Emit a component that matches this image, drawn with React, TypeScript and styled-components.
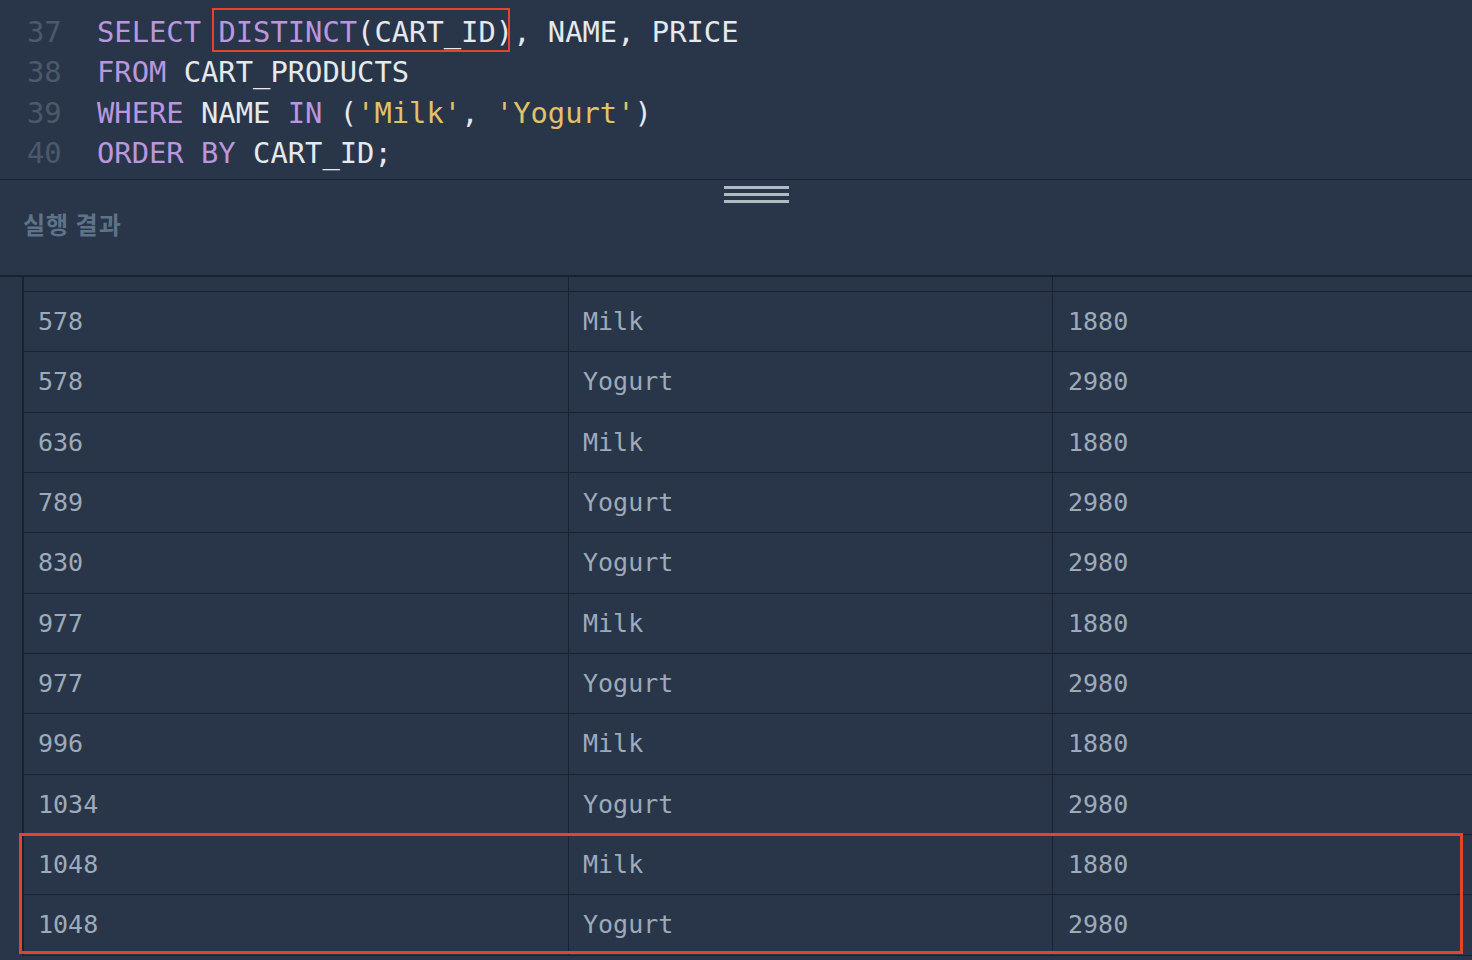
import React from "react";
import styled, { createGlobalStyle } from "styled-components";

const GlobalStyle = createGlobalStyle`
  html, body {
    margin: 0;
    padding: 0;
    background: #29364a;
    overflow: hidden;
  }
  * { box-sizing: border-box; }
`;

const Page = styled.div`
  width: 1472px;
  height: 960px;
  background: #29364a;
  display: flex;
  flex-direction: column;
`;

const Editor = styled.div`
  height: 180px;
  padding-top: 12px;
  border-bottom: 1px solid #182232;
  font-family: "DejaVu Sans Mono", "Liberation Mono", monospace;
  font-size: 28.8px;
`;

const CodeLine = styled.div`
  display: flex;
  height: 40.33px;
  line-height: 40.33px;
  white-space: pre;
`;

const LineNo = styled.span`
  width: 97px;
  padding-left: 27px;
  color: #4c596b;
  flex: none;
`;

const Code = styled.span`
  color: #e6e9ec;
`;

const Kw = styled.span`
  color: #bb96de;
`;

const Str = styled.span`
  color: #e3c168;
`;

const Marked = styled.span`
  position: relative;
  display: inline-block;
  &::after {
    content: "";
    position: absolute;
    left: -6px;
    right: 3px;
    top: -4px;
    bottom: 0;
    border: 2.5px solid #e5432c;
  }
`;

const ResultPanel = styled.div`
  height: 95px;
  padding-top: 6px;
  display: flex;
  flex-direction: column;
`;

const Handle = styled.div`
  margin-left: 724px;
  width: 65px;
  display: flex;
  flex-direction: column;
  gap: 4px;
`;

const HandleBar = styled.div`
  height: 3px;
  background: #b0bbc2;
`;

const ResultTitle = styled.div`
  margin-top: 6px;
  padding-left: 23px;
  font-family: "Noto Sans CJK KR", "Noto Sans", sans-serif;
  font-weight: 700;
  font-size: 24px;
  letter-spacing: 1px;
  line-height: 29px;
  color: #5f7388;
`;

const TableArea = styled.div`
  position: relative;
  display: flex;
  border-top: 2px solid #182232;
`;

const Gutter = styled.div`
  width: 24px;
  flex: none;
  border-right: 2px solid #182232;
`;

const Grid = styled.div`
  flex: 1;
  display: grid;
  grid-template-columns: 545px 484px 1fr;
  font-family: "DejaVu Sans Mono", "Liberation Mono", monospace;
  font-size: 25px;
  color: #9dabb9;
`;

const HeadCell = styled.div<{ $last?: boolean }>`
  height: 15px;
  border-bottom: 1px solid #182232;
  border-right: ${(p) => (p.$last ? "none" : "1px solid #182232")};
`;

const Cell = styled.div<{ $last?: boolean }>`
  height: 60.33px;
  display: flex;
  align-items: center;
  padding-left: ${(p) => (p.$last ? "15px" : "14px")};
  border-bottom: 1px solid #182232;
  border-right: ${(p) => (p.$last ? "none" : "1px solid #182232")};
`;

const RowMark = styled.div`
  position: absolute;
  left: 19px;
  right: 9px;
  top: 556px;
  height: 121px;
  border: 3px solid #e5432c;
  pointer-events: none;
`;

const rows: [string, string, string][] = [
  ["578", "Milk", "1880"],
  ["578", "Yogurt", "2980"],
  ["636", "Milk", "1880"],
  ["789", "Yogurt", "2980"],
  ["830", "Yogurt", "2980"],
  ["977", "Milk", "1880"],
  ["977", "Yogurt", "2980"],
  ["996", "Milk", "1880"],
  ["1034", "Yogurt", "2980"],
  ["1048", "Milk", "1880"],
  ["1048", "Yogurt", "2980"],
];

export default function App() {
  return (
    <Page>
      <GlobalStyle />
      <Editor>
        <CodeLine>
          <LineNo>37</LineNo>
          <Code>
            <Kw>SELECT</Kw>{" "}
            <Marked>
              <Kw>DISTINCT</Kw>(CART_ID)
            </Marked>
            , NAME, PRICE
          </Code>
        </CodeLine>
        <CodeLine>
          <LineNo>38</LineNo>
          <Code>
            <Kw>FROM</Kw> CART_PRODUCTS
          </Code>
        </CodeLine>
        <CodeLine>
          <LineNo>39</LineNo>
          <Code>
            <Kw>WHERE</Kw> NAME <Kw>IN</Kw> (<Str>'Milk'</Str>, <Str>'Yogurt'</Str>)
          </Code>
        </CodeLine>
        <CodeLine>
          <LineNo>40</LineNo>
          <Code>
            <Kw>ORDER BY</Kw> CART_ID;
          </Code>
        </CodeLine>
      </Editor>
      <ResultPanel>
        <Handle>
          <HandleBar />
          <HandleBar />
          <HandleBar />
        </Handle>
        <ResultTitle>실행 결과</ResultTitle>
      </ResultPanel>
      <TableArea>
        <Gutter />
        <Grid>
          <HeadCell />
          <HeadCell />
          <HeadCell $last />
          {rows.map((r, i) => (
            <React.Fragment key={i}>
              <Cell>{r[0]}</Cell>
              <Cell>{r[1]}</Cell>
              <Cell $last>{r[2]}</Cell>
            </React.Fragment>
          ))}
        </Grid>
        <RowMark />
      </TableArea>
    </Page>
  );
}
